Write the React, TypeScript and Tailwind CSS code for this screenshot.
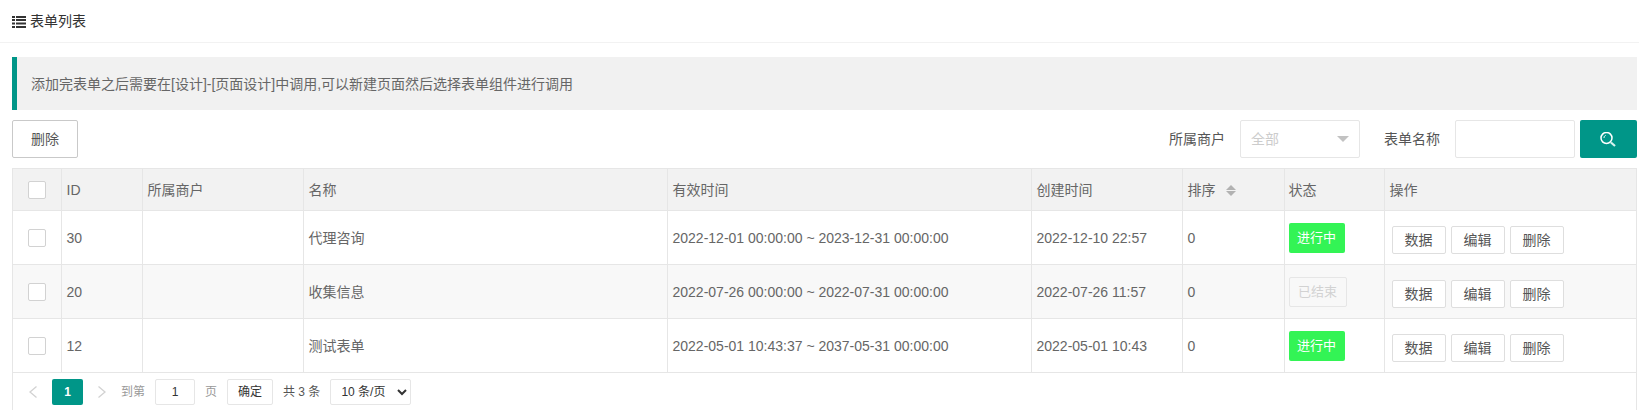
import React from "react";

const rows = [
  { id: 30, name: "代理咨询", time: "2022-12-01 00:00:00 ~ 2023-12-31 00:00:00", created: "2022-12-10 22:57", active: true },
  { id: 20, name: "收集信息", time: "2022-07-26 00:00:00 ~ 2022-07-31 00:00:00", created: "2022-07-26 11:57", active: false },
  { id: 12, name: "测试表单", time: "2022-05-01 10:43:37 ~ 2037-05-31 00:00:00", created: "2022-05-01 10:43", active: true },
];

function Checkbox() {
  return <span className="block w-[18px] h-[18px] mx-auto bg-white border border-[#d2d2d2] rounded-[2px]" />;
}

function ListIcon() {
  return (
    <svg width="14" height="12" viewBox="0 0 14 12" fill="#333">
      <path d="M0 0h3v2H0zM4 0h10v2H4zM0 3h3v2H0zM4 3h10v2H4zM0 6.500h3v2H0zM4 6.500h10v2H4zM0 10h3v2H0zM4 10h10v2H4z" />
    </svg>
  );
}

function SearchIcon() {
  return (
    <svg width="17" height="15" viewBox="0 0 17 15" fill="none" stroke="#fff">
      <circle cx="6.500" cy="6" r="5.500" strokeWidth="1.500" />
      <path d="M4 6c0-1.300 .6-2.200 1.600-2.600" strokeWidth="1" />
      <path d="M11 10.500l4 3.500" strokeWidth="2.200" stroke="#d8f3ef" />
    </svg>
  );
}

function Chevron({ dir }: { dir: "left" | "right" }) {
  return (
    <svg width="8" height="12" viewBox="0 0 8 12" fill="none" stroke="#d2d2d2" strokeWidth="1.300">
      <path d={dir === "left" ? "M7.500 .500L1 6l6.500 5.500" : "M.500 .500L7 6l-6.500 5.500"} />
    </svg>
  );
}

function SortIcon() {
  return (
    <span className="inline-flex flex-col gap-[1px] ml-[10px] align-middle">
      <span className="w-0 h-0 border-x-[5px] border-x-transparent border-b-[5px] border-b-[#b2b2b2]" />
      <span className="w-0 h-0 border-x-[5px] border-x-transparent border-t-[5px] border-t-[#b2b2b2]" />
    </span>
  );
}

function ActionButton({ label }: { label: string }) {
  return (
    <button className="h-[28px] w-[54px] bg-white border border-[#dedede] rounded-[2px] text-[14px] leading-[26px] text-[#555]">
      {label}
    </button>
  );
}

export default function App() {
  const font = { fontFamily: '"Liberation Sans", "Noto Sans CJK SC", sans-serif' };
  return (
    <div style={font} className="w-[1639px] h-[410px] overflow-hidden bg-white text-[14px] text-[#666]">
      {/* Page title */}
      <div className="h-[43px] flex items-center gap-[4px] pl-[12px] pt-[1px] border-b border-[#f2f2f2] text-[#333]">
        <ListIcon />
        <span>表单列表</span>
      </div>

      <div className="pl-[12px] pr-[2px]">
        {/* Tip */}
        <div className="mt-[14px] h-[53px] flex items-center pl-[14px] pt-[1px] bg-[#f1f1f1] border-l-[5px] border-[#009688] text-[#666]">
          添加完表单之后需要在[设计]-[页面设计]中调用,可以新建页面然后选择表单组件进行调用
        </div>

        {/* Toolbar */}
        <div className="mt-[10px] h-[38px] flex items-center">
          <button className="h-[38px] w-[66px] bg-white border border-[#c9c9c9] rounded-[2px] text-[#555]">删除</button>
          <div className="ml-auto flex items-center">
            <span className="mr-[15px] text-[#555]">所属商户</span>
            <div className="w-[120px] h-[38px] flex items-center justify-between pl-[10px] pr-[10px] border border-[#e6e6e6] rounded-[2px] text-[#ccc]">
              <span>全部</span>
              <span className="w-0 h-0 border-x-[6px] border-x-transparent border-t-[6px] border-t-[#c2c2c2]" />
            </div>
            <span className="ml-[24px] mr-[15px] text-[#555]">表单名称</span>
            <div className="w-[120px] h-[38px] border border-[#e6e6e6] rounded-[2px]" />
            <button className="ml-[5px] w-[57px] h-[38px] flex items-center justify-center bg-[#009688] rounded-[2px]">
              <SearchIcon />
            </button>
          </div>
        </div>

        {/* Table */}
        <div className="mt-[10px] border-x border-t border-[#e6e6e6] h-[260px]">
          <table className="w-full table-fixed border-collapse -mt-px">
            <colgroup>
              <col className="w-[48px]" />
              <col className="w-[81px]" />
              <col className="w-[161px]" />
              <col className="w-[364px]" />
              <col className="w-[364px]" />
              <col className="w-[151px]" />
              <col className="w-[102px]" />
              <col className="w-[100px]" />
              <col />
            </colgroup>
            <thead>
              <tr className="h-[42px] bg-[#f2f2f2]">
                <th className="border border-[#e6e6e6] border-l-0 font-normal"><Checkbox /></th>
                {["ID", "所属商户", "名称", "有效时间", "创建时间"].map((h) => (
                  <th key={h} className="border border-[#e6e6e6] px-[5px] pt-[2px] text-left font-normal">{h}</th>
                ))}
                <th className="border border-[#e6e6e6] px-[5px] pt-[1px] text-left font-normal">排序<SortIcon /></th>
                <th className="border border-[#e6e6e6] pl-[4px] pt-[2px] text-left font-normal">状态</th>
                <th className="border border-[#e6e6e6] border-r-0 px-[5px] pt-[2px] text-left font-normal">操作</th>
              </tr>
            </thead>
            <tbody>
              {rows.map((r, i) => (
                <tr key={r.id} className={i === 1 ? "h-[54px] bg-[#f8f8f8]" : "h-[54px]"}>
                  <td className="border border-[#e6e6e6] border-l-0"><Checkbox /></td>
                  <td className="border border-[#e6e6e6] px-[5px] pt-[2px]">{r.id}</td>
                  <td className="border border-[#e6e6e6] px-[5px]"></td>
                  <td className="border border-[#e6e6e6] px-[5px] pt-[2px]">{r.name}</td>
                  <td className="border border-[#e6e6e6] px-[5px] pt-[2px]">{r.time}</td>
                  <td className="border border-[#e6e6e6] px-[5px] pt-[2px]">{r.created}</td>
                  <td className="border border-[#e6e6e6] px-[5px] pt-[2px]">0</td>
                  <td className="border border-[#e6e6e6] pl-[4px]">
                    {r.active ? (
                      <span className="block w-[56px] h-[30px] leading-[29px] text-center text-[13px] text-white bg-[#33f455] rounded-[2px]">进行中</span>
                    ) : (
                      <span className="block w-[58px] h-[30px] leading-[28px] text-center text-[13px] text-[#d2d2d2] border border-[#e6e6e6] rounded-[2px]">已结束</span>
                    )}
                  </td>
                  <td className="border border-[#e6e6e6] border-r-0 pl-[7px]">
                    <div className="flex gap-[5px] mt-[5px]">
                      <ActionButton label="数据" />
                      <ActionButton label="编辑" />
                      <ActionButton label="删除" />
                    </div>
                  </td>
                </tr>
              ))}
            </tbody>
          </table>

          {/* Pagination */}
          <div className="h-[37px] flex items-center pl-[16px] text-[12px] text-[#999]">
            <Chevron dir="left" />
            <span className="ml-[15px] w-[31px] h-[26px] leading-[26px] text-center bg-[#009688] text-white font-bold rounded-[2px]">1</span>
            <span className="ml-[15px] flex"><Chevron dir="right" /></span>
            <span className="ml-[15px]">到第</span>
            <span className="ml-[10px] w-[40px] h-[26px] leading-[24px] text-center border border-[#e6e6e6] rounded-[2px] text-[#333]">1</span>
            <span className="ml-[10px]">页</span>
            <button className="ml-[10px] w-[46px] h-[26px] border border-[#e6e6e6] rounded-[2px] text-[#333]">确定</button>
            <span className="ml-[10px] text-[#555]">共 3 条</span>
            <select defaultValue="10" className="ml-[10px] w-[81px] h-[26px] pl-[6px] border border-[#e6e6e6] rounded-[2px] text-[12px] text-[#333] bg-white appearance-auto">
              <option value="10">10 条/页</option>
            </select>
          </div>
        </div>
      </div>
    </div>
  );
}
